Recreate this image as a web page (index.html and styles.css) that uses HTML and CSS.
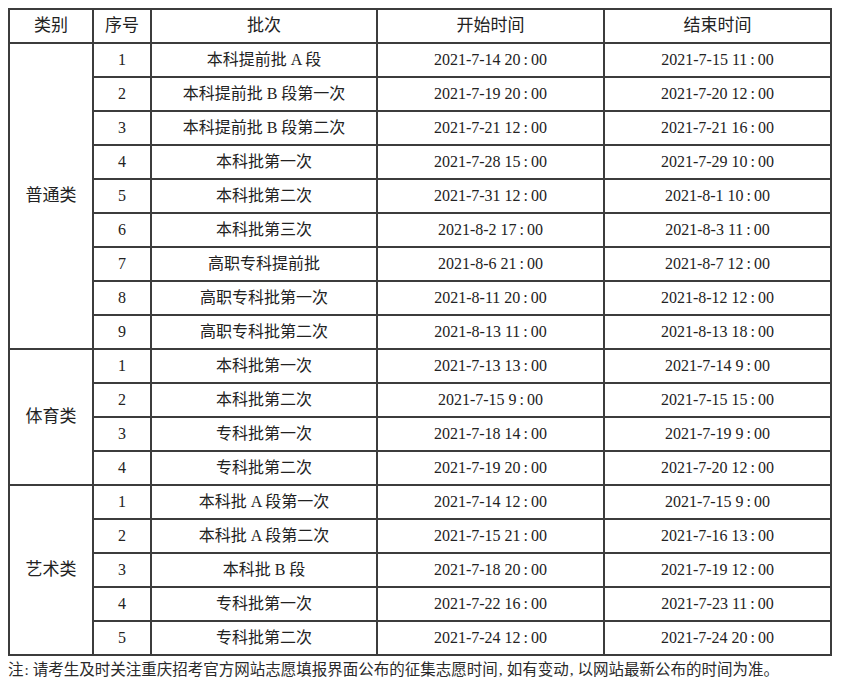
FILE: index.html
```html
<!DOCTYPE html>
<html lang="zh-CN">
<head>
<meta charset="utf-8">
<title>征集志愿时间</title>
<link rel="stylesheet" href="styles.css">
</head>
<body>
<table class="schedule">
  <colgroup>
    <col class="c-cat"><col class="c-no"><col class="c-batch"><col class="c-start"><col class="c-end">
  </colgroup>
  <thead>
    <tr><th>类别</th><th>序号</th><th>批次</th><th>开始时间</th><th>结束时间</th></tr>
  </thead>
  <tbody>
    <tr><td class="cat" rowspan="9">普通类</td><td>1</td><td>本科提前批 A 段</td><td>2021-7-14 20<span class="colon">:</span>00</td><td>2021-7-15 11<span class="colon">:</span>00</td></tr>
    <tr><td>2</td><td>本科提前批 B 段第一次</td><td>2021-7-19 20<span class="colon">:</span>00</td><td>2021-7-20 12<span class="colon">:</span>00</td></tr>
    <tr><td>3</td><td>本科提前批 B 段第二次</td><td>2021-7-21 12<span class="colon">:</span>00</td><td>2021-7-21 16<span class="colon">:</span>00</td></tr>
    <tr><td>4</td><td>本科批第一次</td><td>2021-7-28 15<span class="colon">:</span>00</td><td>2021-7-29 10<span class="colon">:</span>00</td></tr>
    <tr><td>5</td><td>本科批第二次</td><td>2021-7-31 12<span class="colon">:</span>00</td><td>2021-8-1 10<span class="colon">:</span>00</td></tr>
    <tr><td>6</td><td>本科批第三次</td><td>2021-8-2 17<span class="colon">:</span>00</td><td>2021-8-3 11<span class="colon">:</span>00</td></tr>
    <tr><td>7</td><td>高职专科提前批</td><td>2021-8-6 21<span class="colon">:</span>00</td><td>2021-8-7 12<span class="colon">:</span>00</td></tr>
    <tr><td>8</td><td>高职专科批第一次</td><td>2021-8-11 20<span class="colon">:</span>00</td><td>2021-8-12 12<span class="colon">:</span>00</td></tr>
    <tr><td>9</td><td>高职专科批第二次</td><td>2021-8-13 11<span class="colon">:</span>00</td><td>2021-8-13 18<span class="colon">:</span>00</td></tr>
    <tr><td class="cat" rowspan="4">体育类</td><td>1</td><td>本科批第一次</td><td>2021-7-13 13<span class="colon">:</span>00</td><td>2021-7-14 9<span class="colon">:</span>00</td></tr>
    <tr><td>2</td><td>本科批第二次</td><td>2021-7-15 9<span class="colon">:</span>00</td><td>2021-7-15 15<span class="colon">:</span>00</td></tr>
    <tr><td>3</td><td>专科批第一次</td><td>2021-7-18 14<span class="colon">:</span>00</td><td>2021-7-19 9<span class="colon">:</span>00</td></tr>
    <tr><td>4</td><td>专科批第二次</td><td>2021-7-19 20<span class="colon">:</span>00</td><td>2021-7-20 12<span class="colon">:</span>00</td></tr>
    <tr><td class="cat" rowspan="5">艺术类</td><td>1</td><td>本科批 A 段第一次</td><td>2021-7-14 12<span class="colon">:</span>00</td><td>2021-7-15 9<span class="colon">:</span>00</td></tr>
    <tr><td>2</td><td>本科批 A 段第二次</td><td>2021-7-15 21<span class="colon">:</span>00</td><td>2021-7-16 13<span class="colon">:</span>00</td></tr>
    <tr><td>3</td><td>本科批 B 段</td><td>2021-7-18 20<span class="colon">:</span>00</td><td>2021-7-19 12<span class="colon">:</span>00</td></tr>
    <tr><td>4</td><td>专科批第一次</td><td>2021-7-22 16<span class="colon">:</span>00</td><td>2021-7-23 11<span class="colon">:</span>00</td></tr>
    <tr><td>5</td><td>专科批第二次</td><td>2021-7-24 12<span class="colon">:</span>00</td><td>2021-7-24 20<span class="colon">:</span>00</td></tr>
  </tbody>
</table>
<p class="note">注<span class="np">:</span>请考生及时关注重庆招考官方网站志愿填报界面公布的征集志愿时间<span class="np">,</span>如有变动<span class="np">,</span>以网站最新公布的时间为准。</p>
</body>
</html>
```
FILE: styles.css
```css
html, body {
  margin: 0;
  background: #ffffff;
}
body {
  padding: 8px 0 0 8px;
  color: #222222;
  font-family: "Liberation Serif", "Noto Sans CJK SC", serif;
}
.schedule {
  border-collapse: collapse;
  table-layout: fixed;
  width: 822px;
  font-size: 16px;
}
.c-cat { width: 84px; }
.c-no { width: 58px; }
.c-batch { width: 226px; }
.c-start { width: 227px; }
.c-end { width: 227px; }
.schedule th,
.schedule td {
  border: 2px solid #3c3c3c;
  height: 32px;
  padding: 0;
  text-align: center;
  vertical-align: middle;
  font-weight: normal;
  white-space: nowrap;
  line-height: 20px;
}
.schedule th {
  font-size: 17px;
}
.schedule td.cat {
  font-size: 17px;
}
.colon {
  margin: 0 3px;
}
.note {
  margin: 4px 0 0 0;
  font-size: 15.5px;
  line-height: 20px;
  color: #2a2a2a;
}
.np {
  margin: 0 4px 0 1px;
}
```
